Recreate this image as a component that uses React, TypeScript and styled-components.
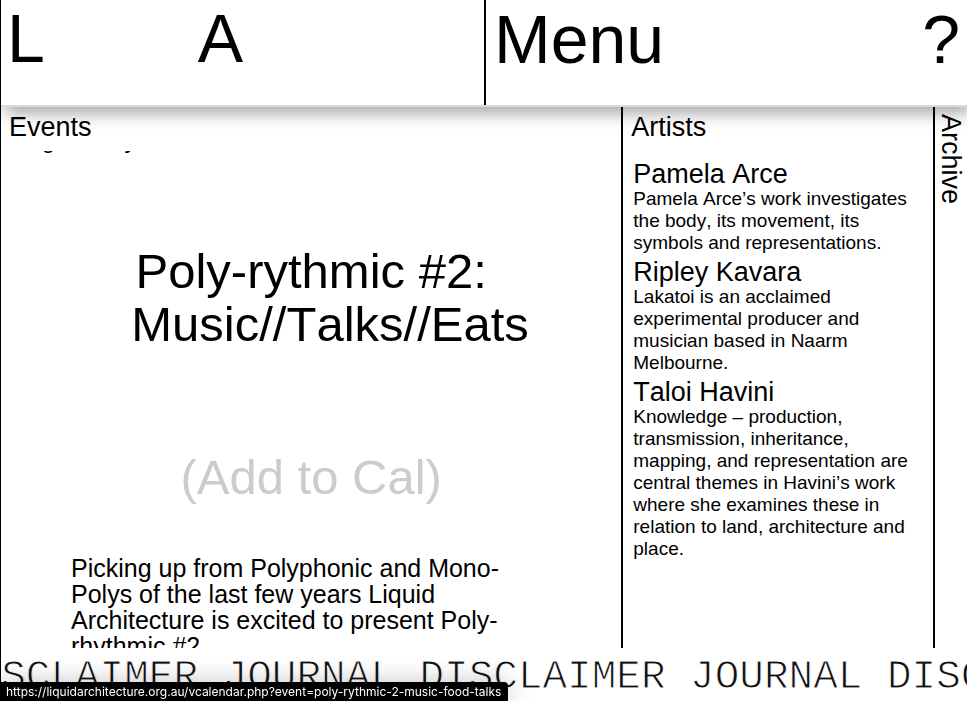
import React from "react";
import styled, { createGlobalStyle } from "styled-components";

const sans = `"Liberation Sans", Arial, Helvetica, sans-serif`;

const GlobalStyle = createGlobalStyle`
  * { box-sizing: border-box; }
  body { margin: 0; background: #fff; color: #000; font-family: ${sans}; font-kerning: none; }
  h1, h2, h3, p { margin: 0; font-weight: 400; }
  a { color: inherit; text-decoration: none; }
  button { font: inherit; font-kerning: none; color: inherit; background: none; border: 0; padding: 0; cursor: pointer; }
`;

const Page = styled.div`
  display: flex;
  flex-direction: column;
  height: 100vh;
  overflow: hidden;
  border-left: 1px solid #000;
`;

const Header = styled.header`
  display: grid;
  grid-template-columns: 1fr 1fr;
  flex: none;
  position: relative;
  z-index: 1;
  background: #fff;
  border-bottom: 2px solid #d9d9d9;
  box-shadow: 4px 6px 16px rgba(0, 0, 0, 0.36);
  font-size: 68px;
  line-height: 76px;
`;

const Brand = styled.a`
  display: grid;
  grid-template-columns: 2fr 3fr;
  padding: 0 0 29px 6px;
`;

const MenuBar = styled.nav`
  display: flex;
  justify-content: space-between;
  align-items: flex-start;
  padding: 1px 7px 28px 8px;
  border-left: 2px solid #000;
`;

const Columns = styled.main`
  display: grid;
  grid-template-columns: 1.99fr 1fr 34px;
  grid-template-rows: minmax(0, 1fr);
  flex: 1;
  min-height: 0;
`;

const Column = styled.section<{ $ruled?: boolean }>`
  display: flex;
  flex-direction: column;
  min-width: 0;
  min-height: 0;
  border-left: ${(p) => (p.$ruled ? "2px solid #000" : "0")};
`;

const ColumnTitle = styled.h2`
  flex: none;
  padding: 5px 8px 9px;
  font-size: 27px;
  line-height: 30px;
`;

const Scroller = styled.div`
  flex: 1;
  min-height: 0;
  overflow: hidden;
`;

const EventList = styled.div`
  margin-top: -24px;
`;

const EventMeta = styled.p`
  padding-left: 6px;
  font-size: 24px;
  line-height: 26px;
`;

const EventTitle = styled.h1`
  width: 58%;
  margin: 92px auto 0;
  font-size: 49px;
  line-height: 53px;
  text-align: center;
  white-space: nowrap;
`;

const CalendarLink = styled.a`
  display: block;
  width: fit-content;
  margin: 100px auto 0;
  font-size: 49px;
  line-height: 53px;
  color: #ccc;
`;

const EventText = styled.p`
  margin-top: 51px;
  padding: 0 68px 0 70px;
  font-size: 25px;
  line-height: 26px;
`;

const ArtistList = styled.div`
  padding: 9px 16px 0 10px;
`;

const Artist = styled.article`
  padding-bottom: 4px;
`;

const ArtistName = styled.h3`
  font-size: 27px;
  line-height: 28px;
`;

const ArtistText = styled.p`
  font-size: 19px;
  line-height: 22px;
`;

const ArchiveButton = styled.button`
  padding: 7px 0;
  width: 100%;
  display: flex;
  align-items: center;
  font-size: 27px;
  line-height: 32px;
  writing-mode: vertical-rl;
`;

const Ticker = styled.a`
  flex: none;
  height: 53px;
  padding-top: 6px;
  overflow: hidden;
  white-space: pre;
  text-indent: -49px;
  font-family: "Liberation Mono", "Courier New", monospace;
  font-size: 41px;
  line-height: 46px;
  color: #111;
  -webkit-text-stroke: 1px #fff;
`;

const StatusBar = styled.div`
  position: fixed;
  left: 0;
  bottom: 0;
  z-index: 2;
  padding: 2px 7px 2px 6px;
  border-radius: 0 4px 0 0;
  background: #000;
  color: #fff;
  box-shadow: 0 0 24px rgba(0, 0, 0, 0.25);
  font-family: Inter, sans-serif;
  font-kerning: normal;
  font-size: 12px;
  font-weight: 400;
  line-height: 15px;
  white-space: nowrap;
`;

const artists = [
  {
    name: "Pamela Arce",
    text: "Pamela Arce’s work investigates the body, its movement, its symbols and representations.",
  },
  {
    name: "Ripley Kavara",
    text: "Lakatoi is an acclaimed experimental producer and musician based in Naarm Melbourne.",
  },
  {
    name: "Taloi Havini",
    text: "Knowledge – production, transmission, inheritance, mapping, and representation are central themes in Havini’s work where she examines these in relation to land, architecture and place.",
  },
];

const calendarUrl =
  "https://liquidarchitecture.org.au/vcalendar.php?event=poly-rythmic-2-music-food-talks";

export default function App() {
  return (
    <Page>
      <GlobalStyle />
      <Header>
        <Brand href="#home">
          <span>L</span>
          <span>A</span>
        </Brand>
        <MenuBar>
          <button type="button">Menu</button>
          <button type="button">?</button>
        </MenuBar>
      </Header>
      <Columns>
        <Column>
          <ColumnTitle>Events</ColumnTitle>
          <Scroller>
            <EventList>
              <EventMeta>Single Entry</EventMeta>
              <EventTitle>
                Poly-rythmic #2:
                <br />
                Music//Talks//Eats
              </EventTitle>
              <CalendarLink href={calendarUrl}>(Add to Cal)</CalendarLink>
              <EventText>
                Picking up from Polyphonic and Mono-Polys of the last few years
                Liquid Architecture is excited to present Poly-rhythmic #2
              </EventText>
            </EventList>
          </Scroller>
        </Column>
        <Column $ruled>
          <ColumnTitle>Artists</ColumnTitle>
          <Scroller>
            <ArtistList>
              {artists.map((artist) => (
                <Artist key={artist.name}>
                  <ArtistName>{artist.name}</ArtistName>
                  <ArtistText>{artist.text}</ArtistText>
                </Artist>
              ))}
            </ArtistList>
          </Scroller>
        </Column>
        <Column $ruled>
          <ArchiveButton type="button">Archive</ArchiveButton>
        </Column>
      </Columns>
      <Ticker href="#journal">{"DISCLAIMER JOURNAL ".repeat(4)}</Ticker>
      <StatusBar role="status">{calendarUrl}</StatusBar>
    </Page>
  );
}
